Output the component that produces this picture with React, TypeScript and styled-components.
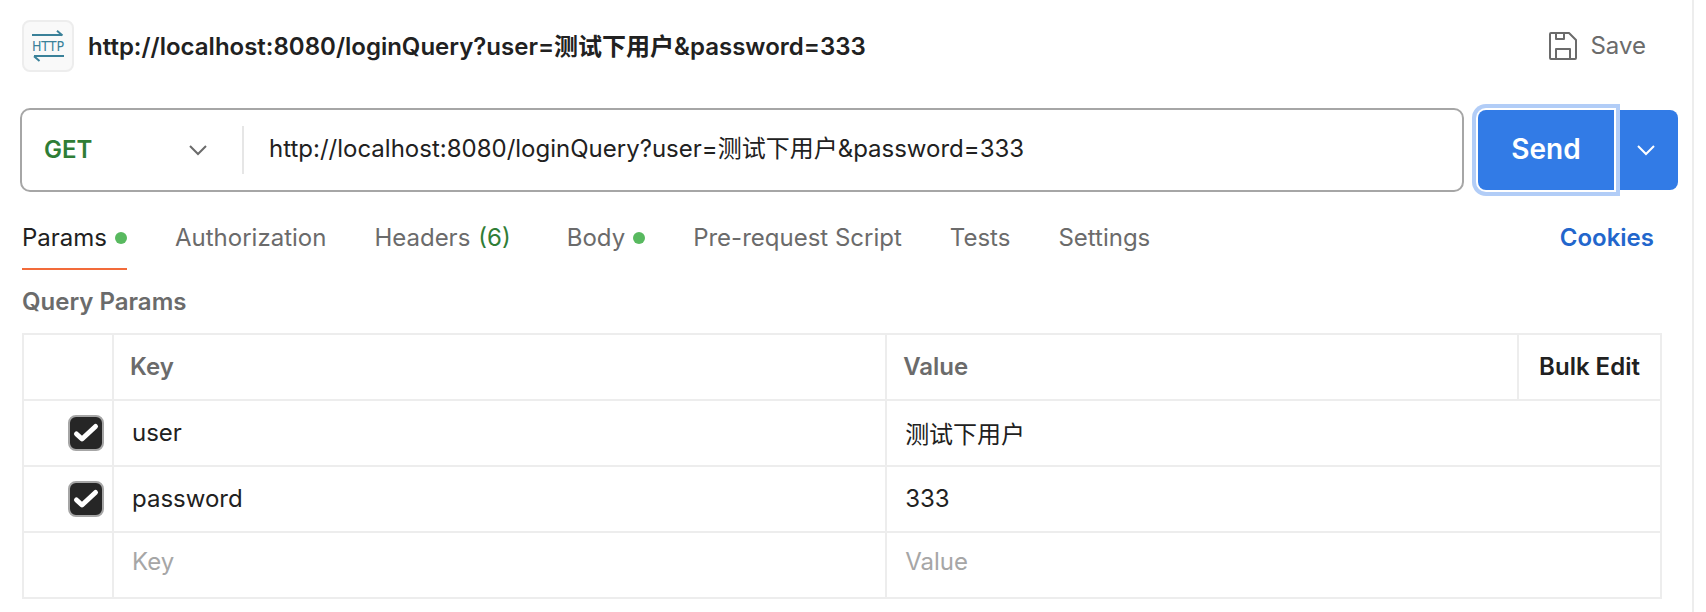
import React, { useState } from 'react';
import styled, { createGlobalStyle } from 'styled-components';

const GlobalStyle = createGlobalStyle`
  * { box-sizing: border-box; }
  body {
    margin: 0;
    background: #fff;
    color: #212121;
    font: 400 24px/32px Inter, "Noto Sans CJK SC", sans-serif;
  }
  button, input, select { font: inherit; color: inherit; }
  button { border: 0; padding: 0; background: none; cursor: pointer; }
`;

const Pane = styled.main`
  min-height: 100vh;
  margin-right: 12px;
  padding: 20px 14px 8px 20px;
  border-right: 2px solid #ededed;
`;

const Header = styled.header`
  display: flex;
  align-items: center;
  gap: 14px;
  padding: 0 32px 0 2px;
`;

const ProtocolBadge = styled.span`
  display: flex;
  flex: none;
  align-items: center;
  justify-content: center;
  width: 52px;
  height: 52px;
  border: 2px solid #ededed;
  border-radius: 8px;
  background: #f9f9f9;
`;

const Title = styled.h1`
  flex: 1;
  margin: 0;
  padding-top: 2px;
  font-size: 24px;
  font-weight: 600;
`;

const SaveButton = styled.button`
  display: flex;
  align-items: center;
  gap: 13px;
  color: #6b6b6b;
`;

const RequestBar = styled.form`
  display: flex;
  gap: 14px;
  margin-top: 36px;
`;

const UrlBox = styled.div`
  display: flex;
  flex: 1;
  align-items: center;
  min-width: 0;
  height: 84px;
  border: 2px solid #a6a6a6;
  border-radius: 10px;
`;

const MethodField = styled.div`
  display: grid;
  flex: none;
  align-items: center;
  width: 222px;
  height: 48px;
  border-right: 2px solid #e6e6e6;

  > * { grid-area: 1 / 1; }
  svg { justify-self: end; margin-right: 34px; pointer-events: none; color: #6b6b6b; }
`;

const MethodSelect = styled.select`
  appearance: none;
  height: 48px;
  padding: 0 22px;
  border: 0;
  outline: 0;
  background: transparent;
  color: #2f7d36;
  font-weight: 600;
`;

const UrlInput = styled.input`
  flex: 1;
  min-width: 0;
  height: 80px;
  padding: 0 25px 8px;
  border: 0;
  outline: 0;
  background: transparent;
`;

const SendGroup = styled.div`
  display: flex;
  flex: none;
  padding: 2px 0;
`;

const SendButton = styled.button`
  z-index: 1;
  width: 136px;
  padding-bottom: 2px;
  border-radius: 8px 0 0 8px;
  outline: 0;
  background: #327be6;
  box-shadow: 0 0 0 2px #fff, 0 0 0 6px #b2cdf7;
  color: #fff;
  font-size: 28px;
  font-weight: 600;
`;

const SendMenuButton = styled.button`
  display: flex;
  align-items: center;
  justify-content: center;
  width: 64px;
  border-radius: 0 8px 8px 0;
  background: #327be6;
  color: #fff;
`;

const TabRow = styled.div`
  display: flex;
  justify-content: space-between;
  align-items: flex-start;
  margin-top: 14px;
  padding: 0 24px 0 2px;
`;

const Tabs = styled.div`
  display: flex;
  gap: 48px;
`;

const Tab = styled.button<{ $active: boolean }>`
  display: flex;
  align-items: center;
  gap: 8px;
  height: 64px;
  border-top: 2px solid transparent;
  border-bottom: 2px solid ${p => (p.$active ? '#f26b3a' : 'transparent')};
  color: ${p => (p.$active ? '#212121' : '#6b6b6b')};
  white-space: nowrap;
`;

const Dot = styled.span`
  width: 12px;
  height: 12px;
  border-radius: 50%;
  background: #58b95f;
`;

const Count = styled.span`
  padding-right: 8px;
  color: #2f7d36;
`;

const CookiesLink = styled.a`
  padding: 16px 0;
  color: #2266cc;
  font-weight: 600;
  text-decoration: none;
`;

const SectionTitle = styled.h2`
  margin: 16px 0 15px 2px;
  color: #6b6b6b;
  font-size: 24px;
  font-weight: 600;
`;

const ParamsFrame = styled.div`
  padding: 0 16px 0 2px;
`;

const ParamsTable = styled.table`
  width: 100%;
  table-layout: fixed;
  border-collapse: separate;
  border-spacing: 0;
  border: solid #ededed;
  border-width: 2px 0 0 2px;
`;

const HeadCell = styled.th<{ $width?: string }>`
  width: ${p => p.$width ?? 'auto'};
  height: 66px;
  padding: 0 16px;
  border: solid #ededed;
  border-width: 0 2px 2px 0;
  color: #6b6b6b;
  font-weight: 600;
  text-align: left;
`;

const BulkCell = styled(HeadCell)`
  padding: 0;
  text-align: center;
`;

const BulkButton = styled.button`
  color: #212121;
  font-weight: 600;
`;

const Cell = styled.td`
  height: 66px;
  padding: 0;
  border: solid #ededed;
  border-width: 0 2px 2px 0;
`;

const CellInput = styled.input<{ $draft?: boolean }>`
  display: block;
  width: 100%;
  height: 64px;
  padding: ${p => (p.$draft ? '0 18px 8px' : '0 18px 2px')};
  border: 0;
  outline: 0;
  background: transparent;
  &::placeholder { color: #a6a6a6; opacity: 1; }
`;

const CheckField = styled.label`
  display: grid;
  justify-content: end;
  padding-right: 8px;

  > * { grid-area: 1 / 1; }
  svg { pointer-events: none; }
`;

const CheckInput = styled.input`
  appearance: none;
  width: 36px;
  height: 36px;
  margin: 0;
  border: 2px solid #a6a6a6;
  border-radius: 8px;
  background: #fff;
  &:checked { background: #262626; }
`;

const Chevron = () => (
  <svg width="20" height="12" viewBox="0 0 20 12" fill="none" stroke="currentColor" strokeWidth="2" aria-hidden="true">
    <path d="M2 2l8 8 8-8" />
  </svg>
);

const HttpIcon = () => (
  <svg width="32" height="32" viewBox="0 0 32 32" fill="none" stroke="#3a8199" strokeWidth="2" overflow="visible" role="img" aria-label="HTTP">
    <path d="M0 5h30M25 0.800l5.500 4.700M32 26H2M7.500 31l-5.500-4.700" />
    <text x="16" y="21" textAnchor="middle" fontFamily="DejaVu Sans Condensed, DejaVu Sans, sans-serif" fontSize="14" fill="#3a8199" stroke="none">HTTP</text>
  </svg>
);

const SaveIcon = () => (
  <svg width="28" height="28" viewBox="0 0 28 28" fill="none" stroke="currentColor" strokeWidth="2" strokeLinejoin="round" aria-hidden="true">
    <path d="M2 1h18l7 7v18a1 1 0 0 1-1 1H2a1 1 0 0 1-1-1V2a1 1 0 0 1 1-1z" />
    <path d="M7 1v6h8V1M7 27V17h14v10" />
  </svg>
);

const CheckMark = () => (
  <svg width="36" height="36" viewBox="0 0 36 36" fill="none" stroke="#fff" strokeWidth="5" strokeLinecap="round" strokeLinejoin="round" aria-hidden="true">
    <path d="M8.500 19l5.500 5 13.500-12.500" />
  </svg>
);

type TabInfo = { name: string; dot?: boolean; count?: number };
const tabs: TabInfo[] = [
  { name: 'Params', dot: true },
  { name: 'Authorization' },
  { name: 'Headers', count: 6 },
  { name: 'Body', dot: true },
  { name: 'Pre-request Script' },
  { name: 'Tests' },
  { name: 'Settings' },
];

const params = [
  { key: 'user', value: '测试下用户' },
  { key: 'password', value: '333' },
];

const requestUrl = 'http://localhost:8080/loginQuery?user=测试下用户&password=333';

function ParamRow({ name, value }: { name: string; value: string }) {
  const [enabled, setEnabled] = useState(true);
  return (
    <tr>
      <Cell>
        <CheckField>
          <CheckInput type="checkbox" aria-label={`Include ${name}`} checked={enabled} onChange={e => setEnabled(e.target.checked)} />
          {enabled && <CheckMark />}
        </CheckField>
      </Cell>
      <Cell><CellInput aria-label="Key" defaultValue={name} /></Cell>
      <Cell colSpan={2}><CellInput aria-label="Value" defaultValue={value} /></Cell>
    </tr>
  );
}

export default function App() {
  const [active, setActive] = useState('Params');
  return (
    <Pane>
      <GlobalStyle />
      <Header>
        <ProtocolBadge><HttpIcon /></ProtocolBadge>
        <Title>{requestUrl}</Title>
        <SaveButton type="button"><SaveIcon />Save</SaveButton>
      </Header>

      <RequestBar onSubmit={e => e.preventDefault()}>
        <UrlBox>
          <MethodField>
            <MethodSelect aria-label="Method" defaultValue="GET">
              <option>GET</option>
              <option>POST</option>
              <option>PUT</option>
              <option>DELETE</option>
            </MethodSelect>
            <Chevron />
          </MethodField>
          <UrlInput aria-label="Request URL" defaultValue={requestUrl} />
        </UrlBox>
        <SendGroup>
          <SendButton type="submit">Send</SendButton>
          <SendMenuButton type="button" aria-label="More send options"><Chevron /></SendMenuButton>
        </SendGroup>
      </RequestBar>

      <TabRow>
        <Tabs role="tablist">
          {tabs.map(t => (
            <Tab key={t.name} type="button" role="tab" aria-selected={active === t.name} $active={active === t.name} onClick={() => setActive(t.name)}>
              {t.name}
              {t.dot && <Dot />}
              {t.count !== undefined && <Count>({t.count})</Count>}
            </Tab>
          ))}
        </Tabs>
        <CookiesLink href="#cookies">Cookies</CookiesLink>
      </TabRow>

      <SectionTitle>Query Params</SectionTitle>
      <ParamsFrame>
        <ParamsTable>
          <thead>
            <tr>
              <HeadCell $width="90px" aria-label="Enabled" />
              <HeadCell $width="47.2%">Key</HeadCell>
              <HeadCell>Value</HeadCell>
              <BulkCell $width="143px"><BulkButton type="button">Bulk Edit</BulkButton></BulkCell>
            </tr>
          </thead>
          <tbody>
            {params.map(p => <ParamRow key={p.key} name={p.key} value={p.value} />)}
            <tr>
              <Cell />
              <Cell><CellInput $draft aria-label="New key" placeholder="Key" /></Cell>
              <Cell colSpan={2}><CellInput $draft aria-label="New value" placeholder="Value" /></Cell>
            </tr>
          </tbody>
        </ParamsTable>
      </ParamsFrame>
    </Pane>
  );
}
